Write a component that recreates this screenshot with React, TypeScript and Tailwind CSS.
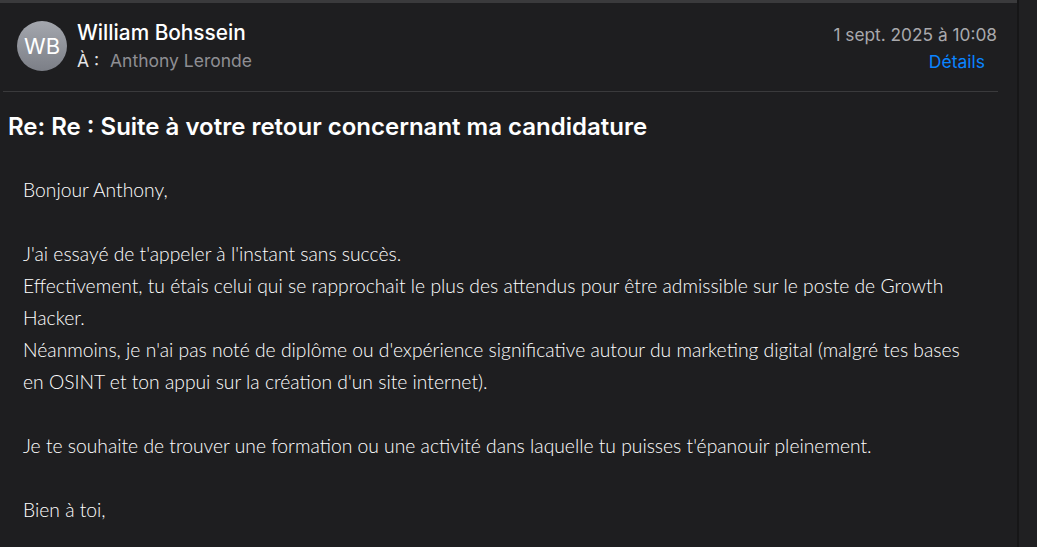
import React from "react";

export default function App() {
  const body = "font-['Lato','Noto_Sans',sans-serif] font-light text-[19.3px] leading-[32px] text-white";
  return (
    <div className="flex h-[547px] w-[1037px] bg-[#1e1e20] overflow-hidden">
      <div className="flex w-[1017px] flex-col border-t-[3px] border-[#3a3a3c] bg-[#1e1e20]">
        <div className="flex items-start pl-[17px] pr-[20px] pt-[18px]">
          <div className="flex h-[50px] w-[50px] shrink-0 items-center justify-center rounded-full bg-gradient-to-b from-[#a4a7ae] to-[#7c7f87] font-['Inter',sans-serif] text-[22px] text-white">
            WB
          </div>
          <div className="ml-[10px] flex flex-col font-['Inter',sans-serif]">
            <div className="text-[20.8px] font-medium leading-[24px] text-white">William Bohssein</div>
            <div className="mt-[5px] flex text-[17.5px] leading-[22px]">
              <span className="text-[#e5e5e7]">À :</span>
              <span className="ml-[11px] text-[#8e8e93]">Anthony Leronde</span>
            </div>
          </div>
          <div className="ml-auto flex flex-col items-end font-['Inter',sans-serif]">
            <div className="mt-[3px] text-[17.3px] leading-[22px] text-[#a9a9ad]">1 sept. 2025 à 10:08</div>
            <div className="mr-[12px] mt-[5px] text-[17.5px] leading-[22px] text-[#0a84ff]">Détails</div>
          </div>
        </div>
        <div className="ml-[3px] mt-[18px] h-px w-[995px] bg-[#3a3a3c]" />
        <div className="ml-[8px] mt-[20px] font-['Inter',sans-serif] text-[24px] font-semibold leading-[30px] text-white">
          Re: Re : Suite à votre retour concernant ma candidature
        </div>
        <div className={`ml-[23px] mt-[32px] ${body}`}>
          <p>Bonjour Anthony,</p>
          <p>&nbsp;</p>
          <p>J'ai essayé de t'appeler à l'instant sans succès.</p>
          <p>
            Effectivement, tu étais celui qui se rapprochait le plus des attendus pour être admissible sur le poste de Growth
            <br />
            Hacker.
          </p>
          <p>
            Néanmoins, je n'ai pas noté de diplôme ou d'expérience significative autour du marketing digital (malgré tes bases
            <br />
            en OSINT et ton appui sur la création d'un site internet).
          </p>
          <p>&nbsp;</p>
          <p>Je te souhaite de trouver une formation ou une activité dans laquelle tu puisses t'épanouir pleinement.</p>
          <p>&nbsp;</p>
          <p>Bien à toi,</p>
        </div>
      </div>
      <div className="w-[20px] border-l-[2px] border-[#161617] bg-[#202022]" />
    </div>
  );
}
